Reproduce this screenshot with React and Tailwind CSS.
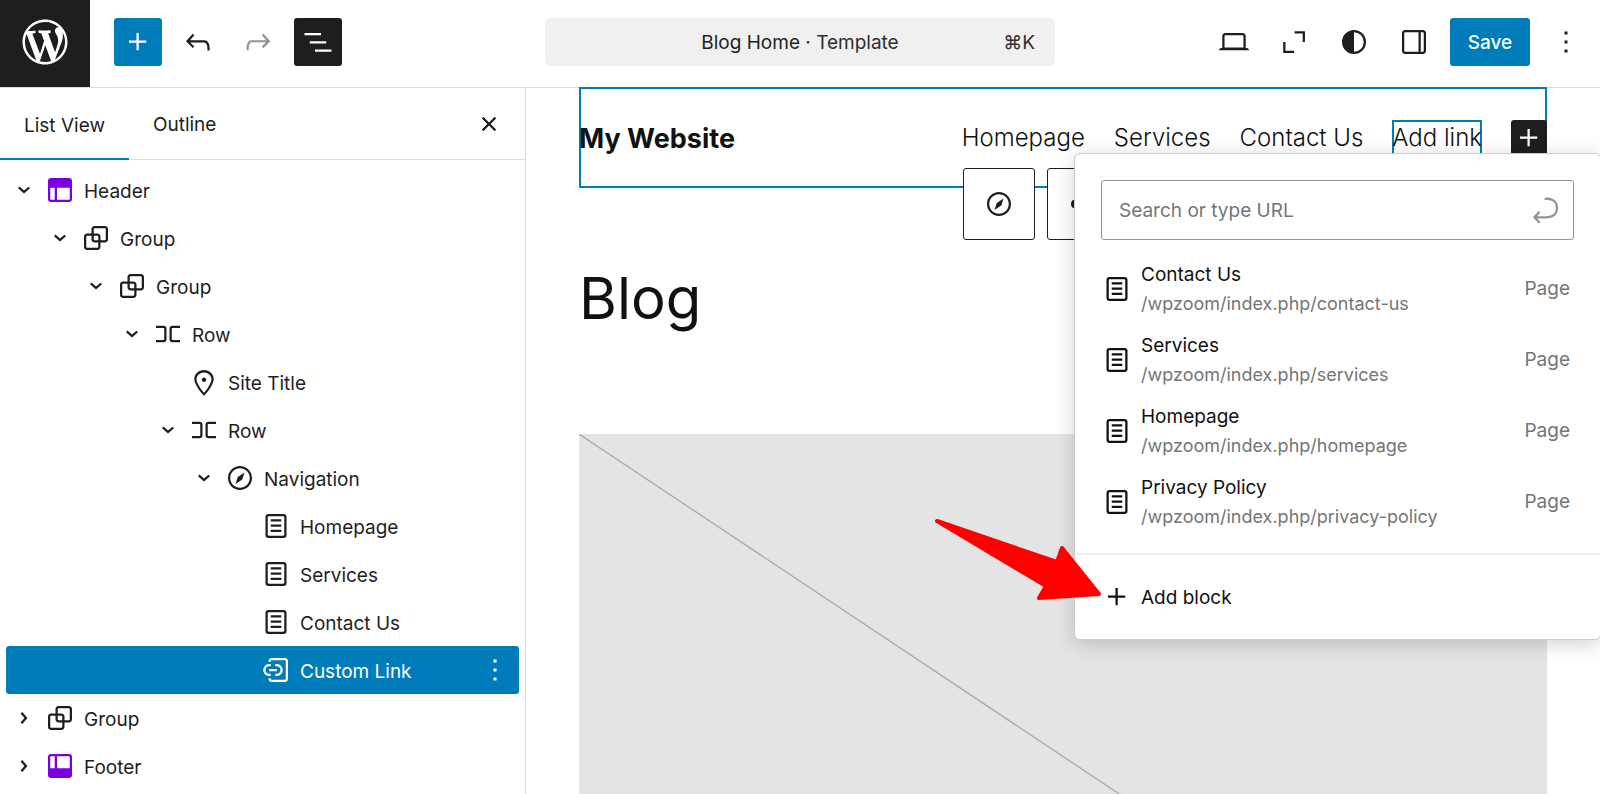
import React from "react";

const ICONS = {
  wordpress:
    "M20 10c0-5.51-4.49-10-10-10C4.48 0 0 4.49 0 10c0 5.52 4.48 10 10 10 5.51 0 10-4.48 10-10zM7.78 15.37L4.37 6.22c.55-.02 1.17-.08 1.17-.08.5-.06.44-1.13-.06-1.11 0 0-1.45.11-2.37.11-.18 0-.37 0-.58-.01C4.12 2.69 6.87 1.11 10 1.11c2.33 0 4.45.87 6.05 2.34-.68-.11-1.65.39-1.65 1.58 0 .74.45 1.36.9 2.1.35.61.55 1.36.55 2.46 0 1.49-1.4 5-1.4 5l-3.03-8.37c.54-.02.82-.17.82-.17.5-.05.44-1.25-.06-1.22 0 0-1.44.12-2.38.12-.87 0-2.33-.12-2.33-.12-.5-.03-.56 1.2-.06 1.22l.92.08 1.26 3.41zM17.41 10c.24-.64.74-1.87.43-4.25.7 1.29 1.05 2.71 1.05 4.25 0 3.29-1.73 6.24-4.4 7.78.97-2.59 1.94-5.2 2.92-7.78zM6.1 18.09C3.12 16.65 1.11 13.53 1.11 10c0-1.3.23-2.48.72-3.59C3.25 10.3 4.67 14.2 6.1 18.09zm4.03-6.63l2.58 6.98c-.86.29-1.76.45-2.71.45-.79 0-1.57-.11-2.29-.33.81-2.38 1.62-4.74 2.42-7.1z",
  plus: "M11 12.5V17.5H12.5V12.5H17.5V11H12.5V6H11V11H6V12.5H11Z",
  undo: "M18.3 11.7c-.6-.6-1.4-.9-2.3-.9H6.7l2.9-3.3-1.1-1-4.5 5L8.5 16l1-1-2.7-2.7H16c.5 0 .9.2 1.3.5 1 1 1 3.4 1 4.5v.3h1.5v-.2c0-1.5 0-4.3-1.5-5.7z",
  redo: "M15.6 6.5l-1.1 1 2.9 3.3H8c-.9 0-1.7.3-2.3.9-1.4 1.5-1.4 4.2-1.4 5.6v.2h1.5v-.3c0-1.1 0-3.5 1-4.5.3-.3.7-.5 1.3-.5h9.2L14.5 15l1.1 1.1 4.6-4.6-4.6-5z",
  listView:
    "M3 6h11v1.5H3V6Zm3.5 5.5h11V13h-11v-1.5ZM21 17H10v1.5h11V17Z",
  desktop:
    "M20.5 16h-.7V8c0-1.1-.9-2-2-2H6.2c-1.1 0-2 .9-2 2v8h-.7c-.8 0-1.5.7-1.5 1.5h20c0-.8-.7-1.5-1.5-1.5zM5.7 8c0-.3.2-.5.5-.5h11.6c.3 0 .5.2.5.5v7.6H5.7V8z",
  expand: "M12.4 4.8h6.9V12h-1.5V6.3h-5.4V4.8ZM4.8 12h1.5v5.8h5.8v1.5H4.8V12Z",
  styles:
    "M20 12a8 8 0 1 1-16 0 8 8 0 0 1 16 0Zm-1.5 0a6.5 6.5 0 0 1-6.5 6.5v-13a6.5 6.5 0 0 1 6.5 6.5Z",
  drawer:
    "M18 4H6c-1.1 0-2 .9-2 2v12c0 1.1.9 2 2 2h12c1.1 0 2-.9 2-2V6c0-1.1-.9-2-2-2zm-3 14.5H6c-.3 0-.5-.2-.5-.5V6c0-.3.2-.5.5-.5h9v13zm3.5-.5c0 .3-.2.5-.5.5h-1.5v-13H18c.3 0 .5.2.5.5v12z",
  more: "M13 19h-2v-2h2v2zm0-6h-2v-2h2v2zm0-6h-2V5h2v2z",
  close:
    "M12 13.06l3.712 3.713 1.061-1.06L13.061 12l3.712-3.712-1.06-1.06L12 10.938 8.288 7.227l-1.061 1.06L10.939 12l-3.712 3.712 1.06 1.061L12 13.061z",
  chevronDown:
    "m15.99 10.889-3.988 3.418-3.988-3.418.976-1.14 3.012 2.582 3.012-2.581.976 1.139Z",
  chevronRight:
    "M10.862 8.04 14.28 12.03l-3.418 3.988-1.139-.976 2.582-3.012-2.582-3.012 1.139-.977Z",
  header:
    "M18.5 10.5H10v8h8a.5.5 0 00.5-.5v-7.5zm-10 0h-3V18a.5.5 0 00.5.5h2.5v-8zM6 4h12a2 2 0 012 2v12a2 2 0 01-2 2H6a2 2 0 01-2-2V6a2 2 0 012-2z",
  footer:
    "M18 5.5h-8v8h8.5V6a.5.5 0 00-.5-.5zm-9.5 8h-3V6a.5.5 0 01.5-.5h2.5v8zM6 4h12a2 2 0 012 2v12a2 2 0 01-2 2H6a2 2 0 01-2-2V6a2 2 0 012-2z",
  group:
    "M18 4h-7c-1.1 0-2 .9-2 2v3H6c-1.1 0-2 .9-2 2v7c0 1.1.9 2 2 2h7c1.1 0 2-.9 2-2v-3h3c1.1 0 2-.9 2-2V6c0-1.1-.9-2-2-2zm-4.5 14c0 .3-.2.5-.5.5H6c-.3 0-.5-.2-.5-.5v-7c0-.3.2-.5.5-.5h3V13c0 1.1.9 2 2 2h2.5v3zm0-4.5H11c-.3 0-.5-.2-.5-.5v-2.5H13c.3 0 .5.2.5.5v2.5zm5-.5c0 .3-.2.5-.5.5h-3V11c0-1.1-.9-2-2-2h-2.5V6c0-.3.2-.5.5-.5h7c.3 0 .5.2.5.5v7z",
  row: "M4 6.5h5a2 2 0 0 1 2 2v7a2 2 0 0 1-2 2H4V16h5a.5.5 0 0 0 .5-.5v-7A.5.5 0 0 0 9 8H4V6.5Zm16 0h-5a2 2 0 0 0-2 2v7a2 2 0 0 0 2 2h5V16h-5a.5.5 0 0 1-.5-.5v-7A.5.5 0 0 1 15 8h5V6.5Z",
  marker:
    "M12 9c-.8 0-1.5.7-1.5 1.5S11.2 12 12 12s1.5-.7 1.5-1.5S12.8 9 12 9zm0-5c-3.6 0-6.5 2.8-6.5 6.2 0 .8.3 1.8.9 3.1.5 1.1 1.2 2.3 2 3.6.7 1 3 3.8 3.2 3.9l.4.5.4-.5c.2-.2 2.6-2.9 3.2-3.9.8-1.2 1.5-2.5 2-3.6.6-1.3.9-2.3.9-3.1C18.5 6.8 15.6 4 12 4zm4.3 8.7c-.5 1-1.1 2.2-1.9 3.4-.5.7-1.7 2.2-2.4 3-.7-.8-1.9-2.3-2.4-3-.8-1.2-1.4-2.3-1.9-3.3-.6-1.4-.7-2.2-.7-2.5 0-2.6 2.2-4.7 5-4.7s5 2.1 5 4.7c0 .2-.1 1-.7 2.4z",
  navigation:
    "M12 4c-4.4 0-8 3.6-8 8s3.6 8 8 8 8-3.6 8-8-3.6-8-8-8zm0 14.5c-3.6 0-6.5-2.9-6.5-6.5S8.4 5.5 12 5.5s6.5 2.9 6.5 6.5-2.9 6.5-6.5 6.5zM9 16l4.5-3L15 8.4l-4.5 3L9 16z",
  page: "M15.5 7.5h-7V9h7V7.5Zm-7 3.5h7v1.5h-7V11Zm7 3.5h-7V16h7v-1.5ZM17 4H7a2 2 0 0 0-2 2v12a2 2 0 0 0 2 2h10a2 2 0 0 0 2-2V6a2 2 0 0 0-2-2ZM7 5.5h10a.5.5 0 0 1 .5.5v12a.5.5 0 0 1-.5.5H7a.5.5 0 0 1-.5-.5V6a.5.5 0 0 1 .5-.5Z",
  customLink:
    "M12.5 14.5h-1V16h1c2.2 0 4-1.8 4-4s-1.8-4-4-4h-1v1.5h1c1.4 0 2.5 1.1 2.5 2.5s-1.1 2.5-2.5 2.5zm-4 1.5v-1.5h-1C6.1 14.5 5 13.4 5 12s1.1-2.5 2.5-2.5h1V8h-1c-2.2 0-4 1.8-4 4s1.8 4 4 4h1zm-1-3.2h5v-1.5h-5v1.5zM18 4H9c-1.1 0-2 .9-2 2v.5h1.5V6c0-.3.2-.5.5-.5h9c.3 0 .5.2.5.5v12c0 .3-.2.5-.5.5H9c-.3 0-.5-.2-.5-.5v-.5H7v.5c0 1.1.9 2 2 2h9c1.1 0 2-.9 2-2V6c0-1.1-.9-2-2-2z",
  connection:
    "M4 12a3 3 0 0 1 5.9-.75h4.2a3 3 0 1 1 0 1.5H9.9A3 3 0 0 1 4 12Z",
  enter:
    "m6.734 16.106 2.176-2.38-1.093-1.028-3.846 4.158 3.846 4.157 1.093-1.027-2.176-2.38h2.811c1.125 0 2.25.03 3.374 0 1.428-.001 3.362-.25 4.963-1.277 1.66-1.065 2.868-2.906 2.868-5.859 0-2.479-1.327-4.896-3.65-5.93-1.82-.813-3.044-.8-4.806-.788l-.567.002v1.5c.184 0 .368 0 .553-.002 1.82-.007 2.704-.014 4.21.657 1.854.827 2.76 2.657 2.76 4.561 0 2.472-.973 3.824-2.178 4.596-1.258.807-2.864 1.04-4.163 1.04h-.02c-1.115.03-2.229 0-3.344 0H6.734Z",
};

function Icon({ name, className = "size-9", viewBox = "0 0 24 24" }) {
  return (
    <svg
      viewBox={viewBox}
      fill="currentColor"
      fillRule="evenodd"
      aria-hidden="true"
      className={`shrink-0 ${className}`}
    >
      <path d={ICONS[name]} />
    </svg>
  );
}

function IconButton({ icon, label, className = "" }) {
  return (
    <button
      type="button"
      aria-label={label}
      className={`flex size-12 shrink-0 items-center justify-center rounded-[3px] ${className}`}
    >
      <Icon name={icon} />
    </button>
  );
}

function TopBar() {
  return (
    <header className="flex h-[87px] shrink-0">
      <a
        href="#dashboard"
        aria-label="Dashboard"
        className="flex w-[90px] shrink-0 justify-center bg-[#1e1e1e] pt-[15px] text-white"
      >
        <Icon name="wordpress" viewBox="-2 -2 24 24" className="size-[54px]" />
      </a>
      <div className="-ml-[90px] grid flex-1 grid-cols-[1fr_510px_1fr] items-start pt-[18px]">
        <div className="flex gap-3 pl-[114px]">
          <IconButton icon="plus" label="Toggle block inserter" className="bg-[#007cba] text-white" />
          <IconButton icon="undo" label="Undo" />
          <IconButton icon="redo" label="Redo" className="text-[#949494]" />
          <IconButton icon="listView" label="List View" className="bg-[#1e1e1e] text-white" />
        </div>
        <button
          type="button"
          className="grid h-12 grid-cols-[1fr_auto_1fr] items-center rounded-md bg-[#f0f0f0] px-5 pt-0.5"
        >
          <span className="col-start-2">
            Blog Home <span className="text-[#2f2f2f]">· Template</span>
          </span>
          <span className="text-right text-[#2f2f2f]">⌘K</span>
        </button>
        <div className="flex justify-end gap-3 pr-[10px]">
          <IconButton icon="desktop" label="View" />
          <IconButton icon="expand" label="Zoom out" />
          <IconButton icon="styles" label="Styles" />
          <IconButton icon="drawer" label="Settings" />
          <button
            type="button"
            className="h-12 w-20 rounded-[3px] bg-[#007cba] pt-0.5 font-medium text-white"
          >
            Save
          </button>
          <IconButton icon="more" label="Options" />
        </div>
      </div>
    </header>
  );
}

const TREE = [
  { label: "Header", icon: "header", indent: "pl-0", state: "open", accent: true },
  { label: "Group", icon: "group", indent: "pl-9", state: "open" },
  { label: "Group", icon: "group", indent: "pl-18", state: "open" },
  { label: "Row", icon: "row", indent: "pl-27", state: "open" },
  { label: "Site Title", icon: "marker", indent: "pl-36" },
  { label: "Row", icon: "row", indent: "pl-36", state: "open" },
  { label: "Navigation", icon: "navigation", indent: "pl-45", state: "open" },
  { label: "Homepage", icon: "page", indent: "pl-54" },
  { label: "Services", icon: "page", indent: "pl-54" },
  { label: "Contact Us", icon: "page", indent: "pl-54" },
  { label: "Custom Link", icon: "customLink", indent: "pl-54", selected: true },
  { label: "Group", icon: "group", indent: "pl-0", state: "closed" },
  { label: "Footer", icon: "footer", indent: "pl-0", state: "closed", accent: true },
];

function TreeRow({ label, icon, indent, state, accent, selected }) {
  return (
    <li
      className={`flex h-12 items-center rounded-[3px] pr-[6px] ${
        selected ? "bg-[#007cba] text-white" : ""
      }`}
    >
      <a href="#block" className={`flex flex-1 items-center ${indent}`}>
        <span className="size-9">
          {state && <Icon name={state === "open" ? "chevronDown" : "chevronRight"} />}
        </span>
        <Icon name={icon} className={accent ? "size-9 text-[#7a00df]" : "size-9"} />
        <span className="pt-1 pl-[6px]">{label}</span>
      </a>
      {selected && (
        <button type="button" aria-label="Options for Custom Link">
          <Icon name="more" />
        </button>
      )}
    </li>
  );
}

function Sidebar() {
  return (
    <aside className="w-[526px] shrink-0 border-t border-r border-[#dddddd]">
      <div className="flex h-[72px] items-stretch border-b border-[#dddddd] pr-[18px]">
        <button
          type="button"
          className="-mb-px px-6 pt-1 shadow-[inset_0_-2px_0_#007cba]"
        >
          List View
        </button>
        <button type="button" className="px-6 pt-1">
          Outline
        </button>
        <button type="button" aria-label="Close" className="ml-auto">
          <Icon name="close" />
        </button>
      </div>
      <ul className="px-[6px] pt-[6px]">
        {TREE.map((item, i) => (
          <TreeRow key={i} {...item} />
        ))}
      </ul>
    </aside>
  );
}

const RESULTS = [
  { title: "Contact Us", url: "/wpzoom/index.php/contact-us" },
  { title: "Services", url: "/wpzoom/index.php/services" },
  { title: "Homepage", url: "/wpzoom/index.php/homepage" },
  { title: "Privacy Policy", url: "/wpzoom/index.php/privacy-policy" },
];

function LinkPopover() {
  return (
    <div className="absolute top-[65px] -right-px w-[527px] rounded-md border border-[#cccccc] bg-white shadow-[0_4px_20px_rgba(0,0,0,0.18)]">
      <div className="px-[26px] pt-[26px]">
        <label className="flex h-[60px] items-center rounded-[3px] border border-[#949494] pr-[10px] pl-[17px]">
          <input
            type="text"
            aria-label="Link"
            placeholder="Search or type URL"
            className="min-w-0 flex-1 pt-0.5 outline-none placeholder:text-[#757575]"
          />
          <Icon name="enter" className="size-9 text-[#949494]" />
        </label>
      </div>
      <ul className="px-6 pt-[13px] pb-4">
        {RESULTS.map((r) => (
          <li key={r.title}>
            <a href="#page" className="flex h-[71px] items-center pr-[6px]">
              <Icon name="page" />
              <span className="ml-[6px] flex flex-1 flex-col">
                <span className="leading-[30px]">{r.title}</span>
                <span className="text-lg leading-7 text-[#757575]">{r.url}</span>
              </span>
              <span className="pt-0.5 text-[#757575]">Page</span>
            </a>
          </li>
        ))}
      </ul>
      <div className="border-t-2 border-[#f0f0f0] px-6 py-[18px]">
        <button type="button" className="flex h-12 items-center">
          <Icon name="plus" />
          <span className="pt-0.5 pl-[6px]">Add block</span>
        </button>
      </div>
    </div>
  );
}

function Canvas() {
  return (
    <main className="relative min-w-0 flex-1 border-t border-[#dddddd] px-[53px] text-[#111111]">
      <div className="-mt-px flex h-[101px] items-center justify-between shadow-[inset_0_0_0_2px_#007cba]">
        <span className="pt-0.5 text-[27px] leading-8 font-bold">My Website</span>
        <nav className="flex items-center gap-[29px] text-2xl leading-9 font-light">
          <a href="#homepage">Homepage</a>
          <a href="#services">Services</a>
          <a href="#contact">Contact Us</a>
          <a href="#add" className="shadow-[inset_0_0_0_2px_#007cba]">
            Add link
          </a>
          <button
            type="button"
            aria-label="Add block"
            className="flex size-9 items-center justify-center rounded-[3px] bg-[#1e1e1e] text-white"
          >
            <Icon name="plus" />
          </button>
        </nav>
      </div>
      <div className="absolute top-[80px] left-[437px] flex gap-3 text-[#1e1e1e]">
        <button
          type="button"
          aria-label="Select Navigation"
          className="flex size-[72px] items-center justify-center rounded-[3px] border border-[#1e1e1e] bg-white"
        >
          <Icon name="navigation" />
        </button>
        <button
          type="button"
          aria-label="Custom Link"
          className="flex size-[72px] items-center justify-center rounded-[3px] border border-[#1e1e1e] bg-white"
        >
          <Icon name="connection" />
        </button>
      </div>
      <h1 className="mt-[74px] text-[58px] leading-[72px]">Blog</h1>
      <svg
        viewBox="0 0 968 645"
        className="mt-[100px] block w-full bg-[#e4e4e4]"
        role="img"
        aria-label="Featured image placeholder"
      >
        <path d="M0 0 968 645" stroke="#b0b0b0" strokeWidth="1.5" />
      </svg>
      <LinkPopover />
      <svg
        viewBox="0 0 170 86"
        aria-hidden="true"
        className="absolute top-[428px] left-[406px] w-[170px]"
      >
        <path
          d="M5 5 125 46 130 32 167 78 107 82 114 70Z"
          fill="#ff0000"
          stroke="#ff0000"
          strokeWidth="4"
          strokeLinejoin="round"
        />
      </svg>
    </main>
  );
}

export default function App() {
  return (
    <div className="flex h-screen flex-col overflow-hidden bg-white font-['Inter',sans-serif] text-[19px] text-[#1e1e1e]">
      <TopBar />
      <div className="flex min-h-0 flex-1">
        <Sidebar />
        <Canvas />
      </div>
    </div>
  );
}
